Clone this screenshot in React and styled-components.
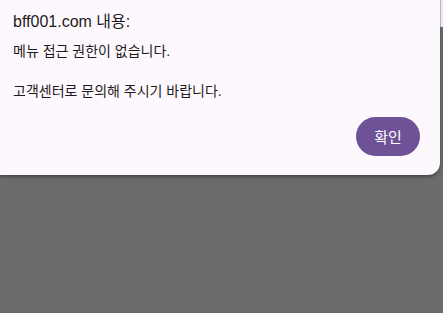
import styled, { createGlobalStyle } from "styled-components";

const GlobalStyle = createGlobalStyle`
  html, body {
    margin: 0;
    padding: 0;
    background: #6b6b6b;
  }
  #root {
    height: 313px;
  }
`;

const Page = styled.div`
  display: flex;
  height: 313px;
  background: #6b6b6b;
  font-family: "Liberation Sans", "Noto Sans CJK KR", sans-serif;
`;

const Dialog = styled.div`
  width: 440px;
  height: 175px;
  box-sizing: border-box;
  padding: 12px 20px 19px 13px;
  display: flex;
  flex-direction: column;
  background: #fdf8fd;
  border-bottom-right-radius: 12px;
  box-shadow: 0 2px 3px rgba(0, 0, 0, 0.35);
  color: #1d1b20;
`;

const Side = styled.div`
  flex: 1;
  display: flex;
  flex-direction: column;
`;

// bit of the page behind the dialog peeking out at top right
const Peek = styled.div`
  height: 27px;
  background: #ebe8ec;
  border-left: 1px solid #b9b6bf;
`;

const Title = styled.div`
  font-size: 16px;
  line-height: 20px;
`;

const Message = styled.div`
  margin-top: 9px;
  font-size: 14px;
  line-height: 20px;
  white-space: pre-line;
`;

const Actions = styled.div`
  margin-top: auto;
  display: flex;
  justify-content: flex-end;
`;

const Button = styled.button`
  width: 64px;
  height: 39px;
  border: none;
  border-radius: 20px;
  background: #6e5196;
  color: #fff;
  font-family: inherit;
  font-size: 15px;
  cursor: pointer;
`;

export default function App() {
  return (
    <>
      <GlobalStyle />
      <Page>
        <Dialog>
          <Title>bff001.com 내용:</Title>
          <Message>{"메뉴 접근 권한이 없습니다.\n\n고객센터로 문의해 주시기 바랍니다."}</Message>
          <Actions>
            <Button>확인</Button>
          </Actions>
        </Dialog>
        <Side>
          <Peek />
        </Side>
      </Page>
    </>
  );
}
